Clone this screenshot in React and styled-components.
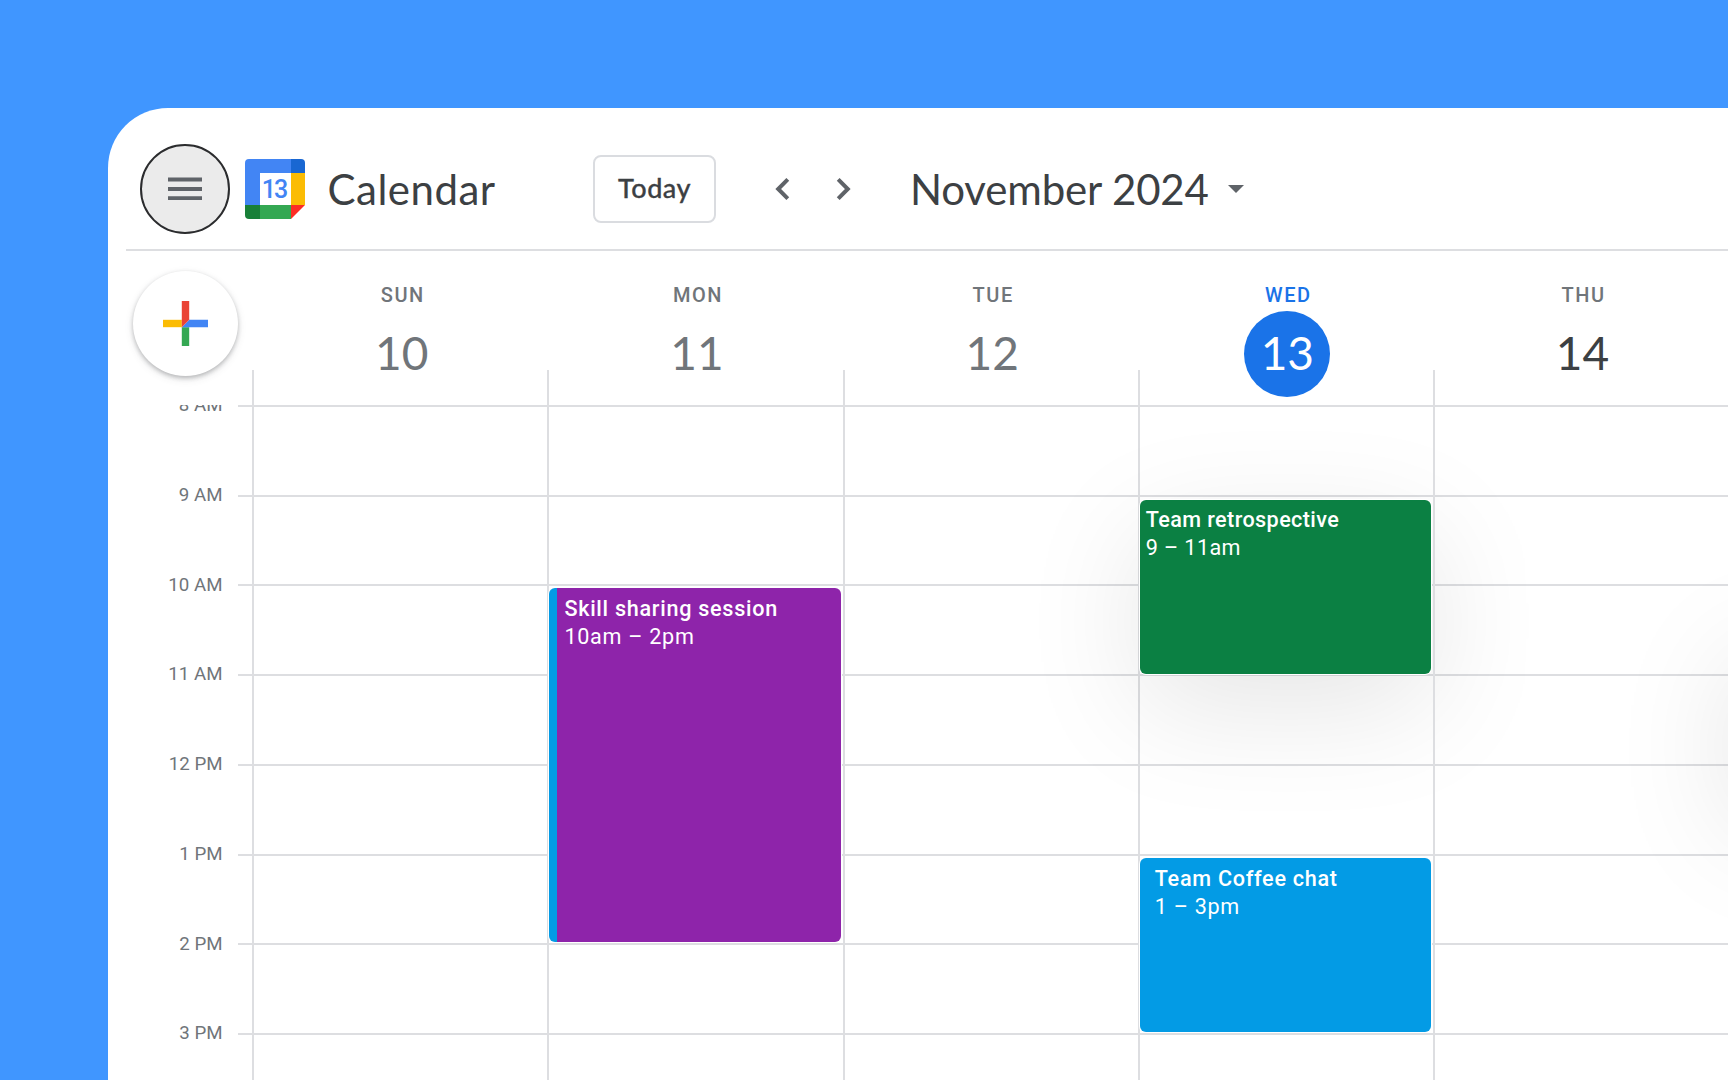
import React from 'react'
import styled, { createGlobalStyle } from 'styled-components'

const GlobalStyle = createGlobalStyle`
    * {
        box-sizing: border-box;
    }
    body {
        margin: 0;
        background-color: #4096ff;
        font-family: Roboto, sans-serif;
    }
`;

const Page = styled.div`
    height: 1080px;
    padding: 108px 0 0 108px;
    overflow: hidden;
    background-color: #4096ff;
`;

const Panel = styled.main`
    height: 972px;
    display: flex;
    flex-direction: column;
    background-color: #fff;
    border-top-left-radius: 60px;
    overflow: hidden;
`;

const Header = styled.header`
    flex: none;
    height: 143px;
    margin-left: 18px;
    padding: 36px 0 0 14px;
    display: flex;
    align-items: flex-start;
    border-bottom: 2px solid #dddee1;
`;

const MenuButton = styled.button`
    width: 90px;
    height: 90px;
    padding: 0;
    display: flex;
    align-items: center;
    justify-content: center;
    border: 2px solid #2b2c2e;
    border-radius: 50%;
    background-color: #ebebeb;
    cursor: pointer;
`;

const Logo = styled.div`
    width: 60px;
    height: 60px;
    margin: 15px 0 0 15px;
`;

const AppName = styled.h1`
    width: 264px;
    margin: 18px 0 0;
    padding-left: 22.5px;
    font-family: Lato, sans-serif;
    font-size: 42px;
    font-weight: 400;
    line-height: 54px;
    letter-spacing: 0.5px;
    color: #3c4043;
`;

const TodayButton = styled.button`
    width: 123px;
    height: 68px;
    margin: 11px 0 0 24px;
    padding: 0 0 3px;
    border: 2px solid #dadce0;
    border-radius: 8px;
    background-color: #fff;
    font-family: Lato, sans-serif;
    font-size: 27px;
    font-weight: 500;
    letter-spacing: 0.5px;
    color: #3c4043;
    cursor: pointer;
    -webkit-text-stroke: 0.3px #3c4043;
`;

const Arrows = styled.nav`
    display: flex;
    gap: 46px;
    margin: 34px 0 0 59px;
`;

const ArrowButton = styled.button`
    width: 15px;
    height: 22px;
    padding: 0;
    display: flex;
    border: none;
    background: none;
    cursor: pointer;
`;

const Month = styled.button`
    display: flex;
    align-items: center;
    gap: 19px;
    margin: 18px 0 0 59px;
    padding: 0;
    border: none;
    background: none;
    font-family: Lato, sans-serif;
    font-size: 42px;
    line-height: 54px;
    letter-spacing: -0.15px;
    white-space: nowrap;
    color: #3c4043;
    cursor: pointer;
`;

const Days = styled.div`
    flex: none;
    height: 154px;
    display: flex;
`;

const CreateCell = styled.div`
    flex: none;
    width: 144.2px;
    padding: 20px 0 0 25px;
`;

const CreateButton = styled.button`
    width: 105px;
    height: 105px;
    padding: 0;
    display: flex;
    align-items: center;
    justify-content: center;
    border: none;
    border-radius: 50%;
    background-color: #fff;
    box-shadow: 0 2px 4px rgba(60, 64, 67, 0.3), 0 3px 9px rgba(60, 64, 67, 0.13);
    cursor: pointer;
`;

const Day = styled.div`
    flex: none;
    width: 295.2px;
    padding: 31px 0 0 4px;
    display: flex;
    flex-direction: column;
    align-items: center;
    background: linear-gradient(#dddee1, #dddee1) left bottom / 2px 35px no-repeat;
`;

const DayName = styled.div`
    padding-left: 2px;
    font-size: 20px;
    font-weight: 500;
    line-height: 26px;
    letter-spacing: 1.5px;
    color: ${(props) => (props.$today ? "#1a73e8" : "#70757a")};
`;

const DayNumber = styled.div`
    width: 86px;
    height: 86px;
    margin-top: 2.5px;
    border-radius: 50%;
    font-family: Lato, sans-serif;
    font-size: 46px;
    line-height: 84px;
    text-align: center;
    color: ${(props) => (props.$today ? "#fff" : props.$future ? "#3c4043" : "#70757a")};
    background-color: ${(props) => (props.$today ? "#1a73e8" : "transparent")};
`;

const Week = styled.div`
    flex: 1;
    display: flex;
    overflow: hidden;
`;

const Hours = styled.div`
    flex: none;
    width: 130px;
    padding-right: 15.5px;
    margin-top: -44px;
`;

const Hour = styled.div`
    height: 89.75px;
    font-size: 18.7px;
    line-height: 89.75px;
    text-align: right;
    color: #70757a;
`;

const Grid = styled.div`
    flex: none;
    display: flex;
    padding-left: 14.2px;
    background: repeating-linear-gradient(#dddee1 0 2px, transparent 2px 89.75px);
`;

const Column = styled.div`
    position: relative;
    flex: none;
    width: 295.2px;
    border-left: 2px solid #dddee1;
`;

/* events float over the hour grid, so they are placed by their start */
const Event = styled.article`
    position: absolute;
    top: ${(props) => props.$top}px;
    left: 0;
    width: 291.5px;
    height: ${(props) => props.$height}px;
    padding: ${(props) => (props.$compact ? "14px 6px" : "15px 15px")};
    border-radius: 6px;
    background: ${(props) => props.$stripe
        ? `linear-gradient(to right, ${props.$stripe} 8px, ${props.$color} 8px)`
        : props.$color};
    box-shadow: 0 0 0 1px #fff${(props) => (props.$lifted ? ", 0 34px 120px rgba(0, 0, 0, 0.1)" : "")};
    font-size: 21.6px;
    line-height: 28px;
    letter-spacing: ${(props) => (props.$compact ? "0.4px" : "0.72px")};
    color: #fff;
`;

const EventTitle = styled.div`
    margin-top: -8px;
    font-weight: 500;
`;

const days = [
    { name: "SUN", number: 10, events: [] },
    {
        name: "MON",
        number: 11,
        events: [
            { title: "Skill sharing session", time: "10am – 2pm", top: 183, height: 354, color: "#8e24aa", stripe: "#039be5" },
        ],
    },
    { name: "TUE", number: 12, events: [] },
    {
        name: "WED",
        number: 13,
        today: true,
        events: [
            { title: "Team retrospective", time: "9 – 11am", top: 95, height: 174, color: "#0b8043", compact: true, lifted: true },
            { title: "Team Coffee chat", time: "1 – 3pm", top: 453, height: 174, color: "#039be5" },
        ],
    },
    { name: "THU", number: 14, future: true, events: [] },
    {
        name: "",
        number: "",
        events: [
            { title: "", time: "", top: 220, height: 174, color: "#fff", lifted: true },
        ],
    },
];

const hours = ["8 AM", "9 AM", "10 AM", "11 AM", "12 PM", "1 PM", "2 PM", "3 PM"];

const CalendarLogo = () => (
    <svg width="60" height="60" viewBox="0 0 60 60">
        <path d="M4 0H46V14H15V46H0V4A4 4 0 0 1 4 0Z" fill="#4285f4" />
        <path d="M46 0H56A4 4 0 0 1 60 4V14H46Z" fill="#1967d2" />
        <path d="M46 14H60V46H46Z" fill="#fbbc04" />
        <path d="M0 46H15V60H4A4 4 0 0 1 0 56Z" fill="#188038" />
        <path d="M15 46H46V60H15Z" fill="#34a853" />
        <path d="M46 46H60L46 60Z" fill="#fc2d25" />
        <text x="29" y="38.5" textAnchor="middle" fontFamily="Roboto, sans-serif" fontSize="25" fontWeight="500" letterSpacing="-2" fill="#4285f4">13</text>
    </svg>
)

const App = () => {
    return (
        <Page>
            <GlobalStyle />
            <Panel>
                <Header>
                    <MenuButton aria-label="Main menu">
                        <svg width="34" height="24" viewBox="0 0 34 24">
                            <path d="M0 2.5H34M0 12H34M0 21.2H34" stroke="#5f6368" strokeWidth="3.8" />
                        </svg>
                    </MenuButton>
                    <Logo><CalendarLogo /></Logo>
                    <AppName>Calendar</AppName>
                    <TodayButton>Today</TodayButton>
                    <Arrows>
                        <ArrowButton aria-label="Previous week">
                            <svg width="15" height="22" viewBox="0 0 15 22">
                                <path d="M12.8 1.4L3.2 11L12.8 20.6" fill="none" stroke="#5f6368" strokeWidth="4" />
                            </svg>
                        </ArrowButton>
                        <ArrowButton aria-label="Next week">
                            <svg width="15" height="22" viewBox="0 0 15 22">
                                <path d="M2.2 1.4L11.8 11L2.2 20.6" fill="none" stroke="#5f6368" strokeWidth="4" />
                            </svg>
                        </ArrowButton>
                    </Arrows>
                    <Month>
                        November 2024
                        <svg width="16" height="8" viewBox="0 0 16 8">
                            <path d="M0 0H16L8 8Z" fill="#5f6368" />
                        </svg>
                    </Month>
                </Header>
                <Days>
                    <CreateCell>
                        <CreateButton aria-label="Create">
                            <svg width="45" height="45" viewBox="0 0 45 45">
                                <path d="M0 18.8H18.8V26.2H0Z" fill="#fbbc04" />
                                <path d="M18.8 26.2H26.2V45H18.8Z" fill="#34a853" />
                                <path d="M26.2 18.8H45V26.2H18.8Z" fill="#4285f4" />
                                <path d="M18.8 0H26.2V18.8L18.8 26.2Z" fill="#ea4335" />
                            </svg>
                        </CreateButton>
                    </CreateCell>
                    {days.map((day, i) => (
                        <Day key={i}>
                            <DayName $today={day.today}>{day.name}</DayName>
                            <DayNumber $today={day.today} $future={day.future}>{day.number}</DayNumber>
                        </Day>
                    ))}
                </Days>
                <Week>
                    <Hours>
                        {hours.map((hour) => <Hour key={hour}>{hour}</Hour>)}
                    </Hours>
                    <Grid>
                        {days.map((day, i) => (
                            <Column key={i}>
                                {day.events.map((event) => (
                                    <Event
                                        key={event.title}
                                        $top={event.top}
                                        $height={event.height}
                                        $color={event.color}
                                        $stripe={event.stripe}
                                        $compact={event.compact}
                                        $lifted={event.lifted}
                                    >
                                        <EventTitle>{event.title}</EventTitle>
                                        <div>{event.time}</div>
                                    </Event>
                                ))}
                            </Column>
                        ))}
                    </Grid>
                </Week>
            </Panel>
        </Page>
    )
}

export default App
